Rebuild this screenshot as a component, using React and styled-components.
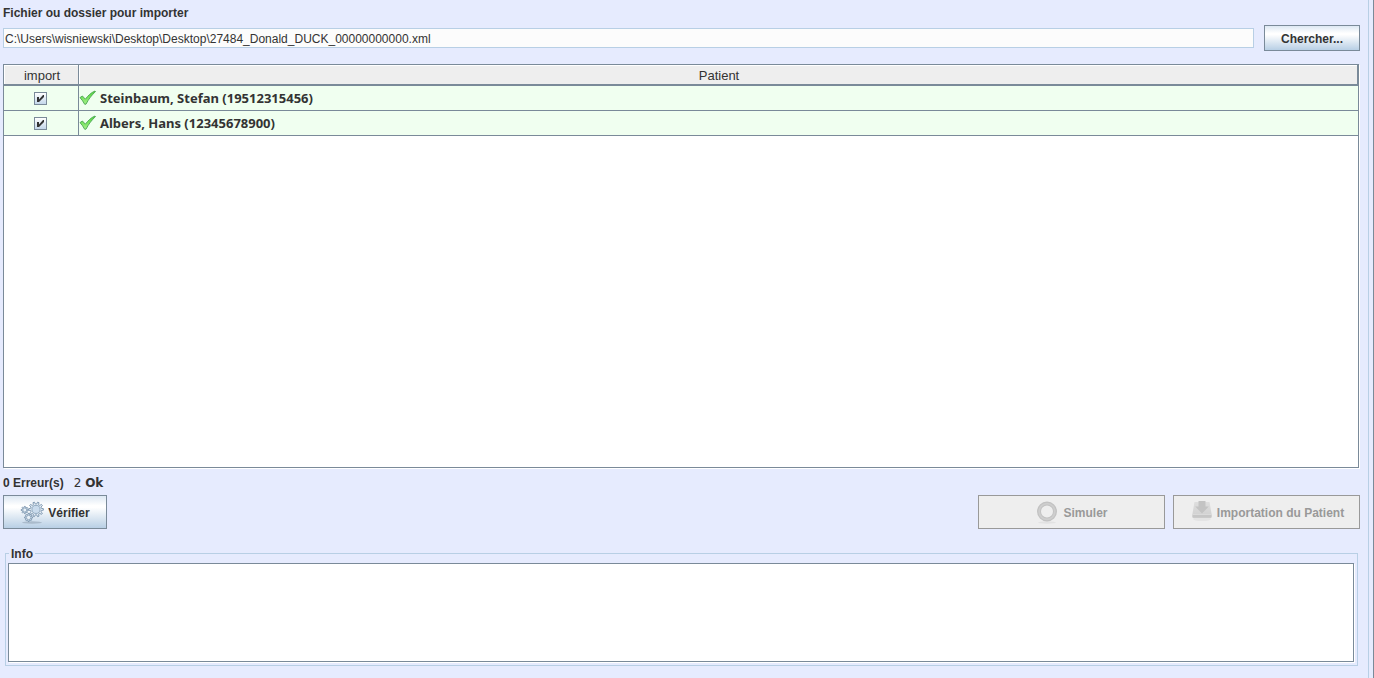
import React, { useState } from 'react';
import styled, { createGlobalStyle } from 'styled-components';

const GlobalStyle = createGlobalStyle`
  * {
    box-sizing: border-box;
  }

  body {
    margin: 0;
    background: #e6ebfe;
    color: #333;
    font-family: 'Liberation Sans', Arial, sans-serif;
    font-size: 12px;
    line-height: 16px;
  }
`;

const Window = styled.div`
  display: flex;
  min-height: 100vh;
  padding-right: 4px;
  border-right: 1px solid #7a8a99;
`;

const Main = styled.main`
  display: flex;
  flex: 1;
  flex-direction: column;
  min-width: 0;
  padding: 5px 8px 12px 3px;
  border-right: 1px solid #b8cfe5;
`;

const FileLabel = styled.label`
  height: 20px;
  font-weight: bold;
`;

const FileRow = styled.div`
  display: flex;
  align-items: center;
  gap: 10px;
`;

const FileInput = styled.input`
  flex: 1;
  min-width: 0;
  height: 20px;
  padding: 2px 1px 0;
  border: 1px solid #b8cfe5;
  background: #fcfcfc;
  color: #333;
  font: inherit;
  outline: none;
`;

const Button = styled.button`
  display: flex;
  align-items: center;
  justify-content: center;
  gap: 4px;
  width: ${({ $width }) => $width}px;
  height: ${({ $small }) => ($small ? 26 : 34)}px;
  padding: 2px 0 0;
  border: 1px solid #7a8a99;
  background: linear-gradient(#dde8f3 0%, #fff 30%, #fff 36%, #b8cfe5 100%);
  color: #333;
  font: inherit;
  font-weight: bold;

  &:disabled {
    border-color: #999;
    background: #eee;
    color: #999;
  }
`;

const TablePanel = styled.div`
  flex: 1;
  margin: 13px 1px 0 0;
  border: 1px solid #7a8a99;
  background: #fff;
  box-shadow: 1px 1px 0 #fff;
`;

const Table = styled.table`
  width: 100%;
  border-spacing: 0;
  table-layout: fixed;
`;

const HeadCell = styled.th`
  width: ${({ $width }) => $width || 'auto'};
  height: 21px;
  padding: 2px 0 0 2px;
  border-right: 1px solid #7a8a99;
  border-bottom: 2px solid #7a8a99;
  background: #eee;
  box-shadow: inset 1px 1px 0 #fff;
  font-size: 13px;
  font-weight: normal;
`;

const Cell = styled.td`
  height: 25px;
  padding: 0;
  border-right: ${({ $last }) => ($last ? '0' : '1px solid #7a8a99')};
  border-bottom: 1px solid #7a8a99;
  background: #f0fff0;
`;

const CheckWrap = styled.label`
  position: relative;
  display: block;
  width: 13px;
  height: 13px;
  margin: 0 auto 0 30px;

  svg {
    position: absolute;
    inset: 0;
    pointer-events: none;
  }
`;

const CheckInput = styled.input`
  display: block;
  width: 13px;
  height: 13px;
  margin: 0;
  border: 1px solid #7a8a99;
  background: linear-gradient(#fff, #c4d7ea);
  appearance: none;
`;

const Patient = styled.div`
  display: flex;
  align-items: center;
  gap: 4px;
  font-family: 'Noto Sans', 'Open Sans', sans-serif;
  font-size: 13px;
  font-weight: bold;
`;

const Status = styled.div`
  display: flex;
  gap: 10px;
  height: 16px;
  margin: 7px 0 4px;
  font-weight: bold;
`;

const OkCount = styled.span`
  font-family: 'DejaVu Sans', sans-serif;
  font-weight: normal;
`;

const Actions = styled.div`
  display: flex;
  justify-content: space-between;
`;

const ActionGroup = styled.div`
  display: flex;
  gap: 8px;
`;

const InfoBox = styled.fieldset`
  min-width: 0;
  margin: 16px 2px 0;
  padding: 1px 3px 3px 2px;
  border: 1px solid #b8cfe5;
`;

const InfoLegend = styled.legend`
  margin-left: 1px;
  padding: 1px 2px 0;
  font-weight: bold;
`;

const InfoText = styled.textarea`
  display: block;
  width: 100%;
  height: 99px;
  padding: 2px;
  border: 1px solid #7a8a99;
  background: #fff;
  box-shadow: 1px 1px 0 #fff;
  color: #333;
  font: inherit;
  outline: none;
  resize: none;
`;

const TickIcon = () => (
  <svg width="17" height="16" viewBox="0 0 17 16" aria-hidden="true">
    <defs>
      <linearGradient id="tick" x1="0" y1="0" x2="0" y2="1">
        <stop offset="0" stopColor="#4fd636" />
        <stop offset="1" stopColor="#a4f088" />
      </linearGradient>
    </defs>
    <path
      d="M1 7.600 3.400 6l3 3.200C8.800 5.800 12 2.600 16 1l.5.600C12.800 5 9.800 8.800 7 14.200H5.600C4.400 11.800 2.900 9.600 1 7.600Z"
      fill="url(#tick)"
      stroke="#4aa552"
      strokeWidth=".9"
      strokeLinejoin="round"
    />
  </svg>
);

const GearPath = ({ cx, cy, r, teeth, fill }) => {
  const points = [];
  for (let i = 0; i < teeth; i += 1) {
    [-0.3, -0.17, 0.17, 0.3].forEach((offset, k) => {
      const angle = ((i + offset) / teeth) * Math.PI * 2;
      const radius = k === 1 || k === 2 ? r : r * 0.74;
      points.push(`${cx + radius * Math.cos(angle)},${cy + radius * Math.sin(angle)}`);
    });
  }
  return (
    <g stroke="#7792ab" strokeWidth=".9">
      <polygon points={points.join(' ')} fill="#e4edf5" />
      <circle cx={cx} cy={cy} r={r * 0.55} fill={fill} stroke="#8ba4ba" />
    </g>
  );
};

const GearsIcon = () => (
  <svg width="24" height="24" viewBox="0 0 24 24" aria-hidden="true">
    <ellipse cx="12" cy="21.500" rx="10" ry="1.200" fill="#8999aa" opacity=".5" />
    <GearPath cx={4.8} cy={9} r={3.6} teeth={8} fill="#e9f1f8" />
    <GearPath cx={8.6} cy={16.5} r={4} teeth={8} fill="#e9f1f8" />
    <GearPath cx={16} cy={8.4} r={7.4} teeth={10} fill="#c9dbec" />
  </svg>
);

const RingIcon = () => (
  <svg width="24" height="24" viewBox="0 0 24 24" aria-hidden="true">
    <ellipse cx="12" cy="21.500" rx="9" ry="1.200" fill="#e2e2e2" />
    <circle cx="12" cy="10.500" r="8" fill="none" stroke="#c2c2c2" strokeWidth="4" />
    <circle cx="12" cy="10.500" r="7.800" fill="none" stroke="#cecece" strokeWidth="1.800" />
  </svg>
);

const ImportIcon = () => (
  <svg width="24" height="24" viewBox="0 0 24 24" aria-hidden="true">
    <defs>
      <linearGradient id="drive" x1="0" y1="0" x2="0" y2="1">
        <stop offset="0" stopColor="#dedede" />
        <stop offset="1" stopColor="#cfcfcf" />
      </linearGradient>
    </defs>
    <ellipse cx="13" cy="18" rx="9" ry="2" fill="#e4e4e4" />
    <path d="M5.500 1h15L22.500 12.500v3.500q0 .8-.8.8H4.300q-.8 0-.8-.8v-3.500z" fill="url(#drive)" />
    <path d="M3.500 13.500h19v2.500q0 .8-.8.8H4.300q-.8 0-.8-.8z" fill="#c6c6c6" />
    <path d="M4 13.500h18" stroke="#dadada" />
    <path d="M9.500 0h7v5.500h3.300L13 12.500 6.200 5.500h3.300z" fill="#c3c3c3" />
  </svg>
);

const PATIENTS = [
  { id: 1, name: 'Steinbaum, Stefan (19512315456)' },
  { id: 2, name: 'Albers, Hans (12345678900)' },
];

const ImportCheck = ({ name }) => {
  const [checked, setChecked] = useState(true);

  return (
    <CheckWrap>
      <CheckInput
        type="checkbox"
        aria-label={name}
        checked={checked}
        onChange={() => setChecked(!checked)}
      />
      {checked && (
        <svg width="13" height="13" viewBox="0 0 13 13" aria-hidden="true">
          <path d="M3 5h2v2.500L9 3h1v2L5 10H3z" fill="#333" />
        </svg>
      )}
    </CheckWrap>
  );
};

const App = () => {
  const [path, setPath] = useState(
    'C:\\Users\\wisniewski\\Desktop\\Desktop\\27484_Donald_DUCK_00000000000.xml'
  );

  return (
    <Window>
      <GlobalStyle />
      <Main>
        <FileLabel htmlFor="file">Fichier ou dossier pour importer</FileLabel>
        <FileRow>
          <FileInput id="file" value={path} onChange={(e) => setPath(e.target.value)} />
          <Button type="button" $small $width={96}>
            Chercher...
          </Button>
        </FileRow>
        <TablePanel>
          <Table>
            <thead>
              <tr>
                <HeadCell $width="75px">import</HeadCell>
                <HeadCell>Patient</HeadCell>
              </tr>
            </thead>
            <tbody>
              {PATIENTS.map(({ id, name }) => (
                <tr key={id}>
                  <Cell>
                    <ImportCheck name={name} />
                  </Cell>
                  <Cell $last>
                    <Patient>
                      <TickIcon />
                      {name}
                    </Patient>
                  </Cell>
                </tr>
              ))}
            </tbody>
          </Table>
        </TablePanel>
        <Status>
          <span>0 Erreur(s)</span>
          <OkCount>
            2 <b>Ok</b>
          </OkCount>
        </Status>
        <Actions>
          <Button type="button" $width={104}>
            <GearsIcon />
            Vérifier
          </Button>
          <ActionGroup>
            <Button type="button" $width={187} disabled>
              <RingIcon />
              Simuler
            </Button>
            <Button type="button" $width={187} disabled>
              <ImportIcon />
              Importation du Patient
            </Button>
          </ActionGroup>
        </Actions>
        <InfoBox>
          <InfoLegend>
            <label htmlFor="info">Info</label>
          </InfoLegend>
          <InfoText id="info" />
        </InfoBox>
      </Main>
    </Window>
  );
};

export default App;
